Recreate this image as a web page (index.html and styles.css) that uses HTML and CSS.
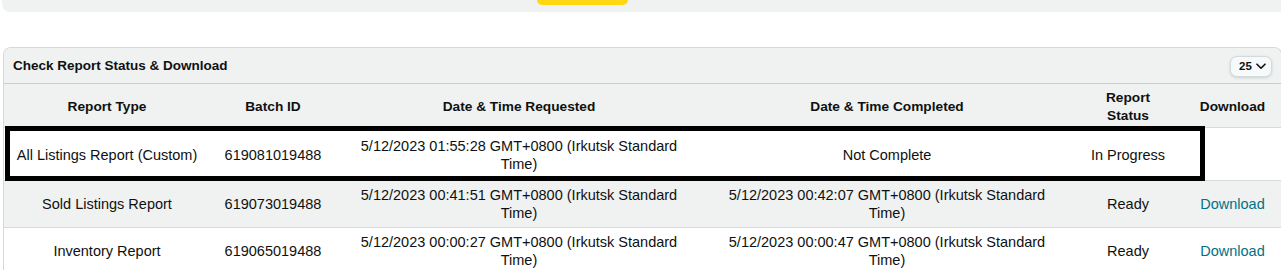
FILE: index.html
```html
<!DOCTYPE html>
<html lang="en">
<head>
<meta charset="utf-8">
<title>Check Report Status &amp; Download</title>
<link rel="stylesheet" href="styles.css">
</head>
<body>
  <div class="topbar">
    <div class="topbar-btn"></div>
  </div>

  <section class="card">
    <header class="card-head">
      <h2 class="card-title">Check Report Status &amp; Download</h2>
      <button class="page-size" type="button">
        <span>25</span>
        <svg class="chev" width="10" height="7" viewBox="0 0 10 7"><path d="M1 1.2 L5 5.2 L9 1.2" fill="none" stroke="#0f1111" stroke-width="1.6" stroke-linecap="round" stroke-linejoin="round"/></svg>
      </button>
    </header>

    <div class="table-wrap">
      <table class="reports">
        <colgroup>
          <col class="c-type"><col class="c-batch"><col class="c-req"><col class="c-comp"><col class="c-status"><col class="c-dl">
        </colgroup>
        <thead>
          <tr>
            <th>Report Type</th>
            <th>Batch ID</th>
            <th>Date &amp; Time Requested</th>
            <th>Date &amp; Time Completed</th>
            <th>Report Status</th>
            <th>Download</th>
          </tr>
        </thead>
        <tbody>
          <tr class="row-first">
            <td>All Listings Report (Custom)</td>
            <td>619081019488</td>
            <td>5/12/2023 01:55:28 GMT+0800 (Irkutsk Standard Time)</td>
            <td>Not Complete</td>
            <td>In Progress</td>
            <td></td>
          </tr>
          <tr class="row-alt">
            <td>Sold Listings Report</td>
            <td>619073019488</td>
            <td>5/12/2023 00:41:51 GMT+0800 (Irkutsk Standard Time)</td>
            <td>5/12/2023 00:42:07 GMT+0800 (Irkutsk Standard Time)</td>
            <td>Ready</td>
            <td><a class="dl" href="#">Download</a></td>
          </tr>
          <tr>
            <td>Inventory Report</td>
            <td>619065019488</td>
            <td>5/12/2023 00:00:27 GMT+0800 (Irkutsk Standard Time)</td>
            <td>5/12/2023 00:00:47 GMT+0800 (Irkutsk Standard Time)</td>
            <td>Ready</td>
            <td><a class="dl" href="#">Download</a></td>
          </tr>
        </tbody>
      </table>
      <div class="highlight"></div>
    </div>
  </section>
</body>
</html>
```

FILE: styles.css
```css
* { box-sizing: border-box; }

html, body {
  margin: 0;
  padding: 0;
  background: #ffffff;
  overflow: hidden;
}

body {
  font-family: "Liberation Sans", Arial, sans-serif;
  font-size: 14.5px;
  line-height: 18px;
  color: #0f1111;
  width: 1281px;
}

.topbar {
  height: 12px;
  margin-left: 2px;
  background: #f0f2f2;
  border-bottom-left-radius: 8px;
  padding-left: 535px;
}

.topbar-btn {
  width: 91px;
  height: 5px;
  background: #ffd814;
  border-radius: 0 0 8px 8px;
}

.card {
  margin: 35px 0 0 3px;
  width: 1279px;
  border: 1px solid #d5d9d9;
  border-bottom: none;
  border-radius: 8px 8px 0 0;
  overflow: hidden;
}

.card-head {
  height: 36px;
  background: #f0f2f2;
  border-bottom: 1px solid #c9cccc;
  display: flex;
  align-items: center;
  justify-content: space-between;
  padding: 0 9px 0 9px;
}

.card-title {
  margin: 0;
  font-size: 13.5px;
  font-weight: 700;
  line-height: 18px;
}

.page-size {
  display: flex;
  align-items: center;
  gap: 4px;
  height: 21px;
  width: 42px;
  padding: 0 0 0 8px;
  margin-top: 1px;
  background: #f7fafa;
  border: 1px solid #d5d9d9;
  border-radius: 7px;
  box-shadow: 0 1px 3px rgba(15, 17, 17, 0.15);
  font-family: inherit;
  font-size: 11.5px;
  font-weight: 700;
  color: #0f1111;
}

.chev { display: block; }

.table-wrap {
  position: relative;
}

.reports {
  width: 1277px;
  border-collapse: collapse;
  table-layout: fixed;
}

.c-type { width: 206px; }
.c-batch { width: 126px; }
.c-req { width: 366px; }
.c-comp { width: 370px; }
.c-status { width: 112px; }
.c-dl { width: 97px; }

.reports th {
  background: #f0f2f2;
  font-size: 13.7px;
  font-weight: 700;
  text-align: center;
  vertical-align: middle;
  padding: 5px 15px 2px;
  border-bottom: 1px solid #d5d9d9;
}

.reports td {
  text-align: center;
  vertical-align: middle;
  padding: 5px 13px;
  border-bottom: 1px solid #d5d9d9;
}

.reports td:first-child { padding-left: 4px; padding-right: 4px; }
.reports td:nth-child(4) { padding-left: 15px; padding-right: 15px; }
.reports td:nth-child(5) { padding-left: 15px; padding-right: 15px; }

.row-first td {
  padding-top: 9px;
  padding-bottom: 7px;
}

.row-alt td { background: #f0f2f2; }

.dl {
  color: #007185;
  text-decoration: none;
}

.highlight {
  position: absolute;
  left: 1px;
  top: 42px;
  width: 1200px;
  height: 55px;
  border: 5px solid #000000;
  pointer-events: none;
}
```
